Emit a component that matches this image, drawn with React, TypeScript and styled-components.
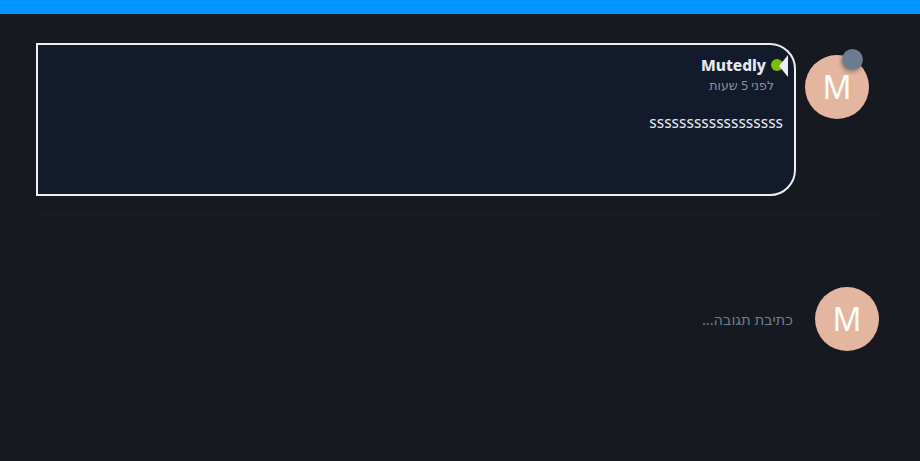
import React from 'react';
import styled, { createGlobalStyle } from 'styled-components';

const GlobalStyle = createGlobalStyle`
  html, body {
    margin: 0;
    padding: 0;
    background: #161920;
  }
  body {
    font-family: 'Noto Sans', 'DejaVu Sans', sans-serif;
  }
`;

const TopBar = styled.div`
  height: 14px;
  background: #0096ff;
`;

const Page = styled.main`
  direction: rtl;
  padding: 29px 40px 0 36px;
`;

const CommentRow = styled.section`
  display: flex;
  align-items: flex-start;
  gap: 9px;
  padding-right: 11px;
`;

const Avatar = styled.div<{ $top?: number }>`
  position: relative;
  flex: none;
  width: 64px;
  height: 64px;
  margin-top: ${(p) => p.$top ?? 0}px;
  border-radius: 50%;
  background: #e4b6a0;
  color: #fff;
  display: flex;
  align-items: center;
  justify-content: center;
  font-family: 'Noto Sans', sans-serif;
  font-size: 32px;
  font-weight: 400;
  line-height: 1;
`;

const StatusDot = styled.span`
  position: absolute;
  top: -6px;
  right: 6px;
  width: 21px;
  height: 21px;
  border-radius: 50%;
  background: #6c7b90;
  box-shadow: -1px 2px 4px rgba(0, 0, 0, 0.35);
`;

const Card = styled.div`
  position: relative;
  flex: 1;
  height: 153px;
  box-sizing: border-box;
  border: 2px solid #eceef4;
  border-radius: 0 26px 26px 0;
  background: #131a2b;
  padding: 9px 11px 0 0;
`;

const Tail = styled.span`
  position: absolute;
  top: 10px;
  right: 6px;
  width: 0;
  height: 0;
  border-top: 11px solid transparent;
  border-bottom: 11px solid transparent;
  border-right: 9px solid #eceef4;
`;

const NameLine = styled.div`
  display: flex;
  align-items: center;
  gap: 5px;
  height: 22px;
`;

const Online = styled.span`
  width: 12px;
  height: 12px;
  border-radius: 50%;
  background: #7cbd00;
`;

const Name = styled.span`
  direction: ltr;
  font-family: 'Noto Sans', sans-serif;
  font-weight: 800;
  font-size: 15.5px;
  color: #e4e8f0;
`;

const Time = styled.div`
  margin-top: 2px;
  margin-right: 9px;
  font-size: 12.5px;
  line-height: 16px;
  color: #8b93a3;
`;

const Body = styled.p`
  margin: 18px 0 0;
  font-size: 15.5px;
  line-height: 20px;
  color: #e4e8f0;
`;

const Divider = styled.hr`
  margin: 18px 0 0;
  border: none;
  height: 1px;
  background: #1d2028;
`;

const ReplyRow = styled.section`
  display: flex;
  align-items: center;
  gap: 22px;
  margin-top: 72px;
  padding-right: 1px;
`;

const ReplyInput = styled.div`
  font-size: 14.5px;
  color: #6f7d94;
`;

export default function App() {
  return (
    <>
      <GlobalStyle />
      <TopBar />
      <Page>
        <CommentRow>
          <Avatar $top={12}>
            M
            <StatusDot />
          </Avatar>
          <Card>
            <Tail />
            <NameLine>
              <Online />
              <Name>Mutedly</Name>
            </NameLine>
            <Time>לפני 5 שעות</Time>
            <Body>ssssssssssssssssss</Body>
          </Card>
        </CommentRow>
        <Divider />
        <ReplyRow>
          <Avatar>M</Avatar>
          <ReplyInput>כתיבת תגובה...</ReplyInput>
        </ReplyRow>
      </Page>
    </>
  );
}
